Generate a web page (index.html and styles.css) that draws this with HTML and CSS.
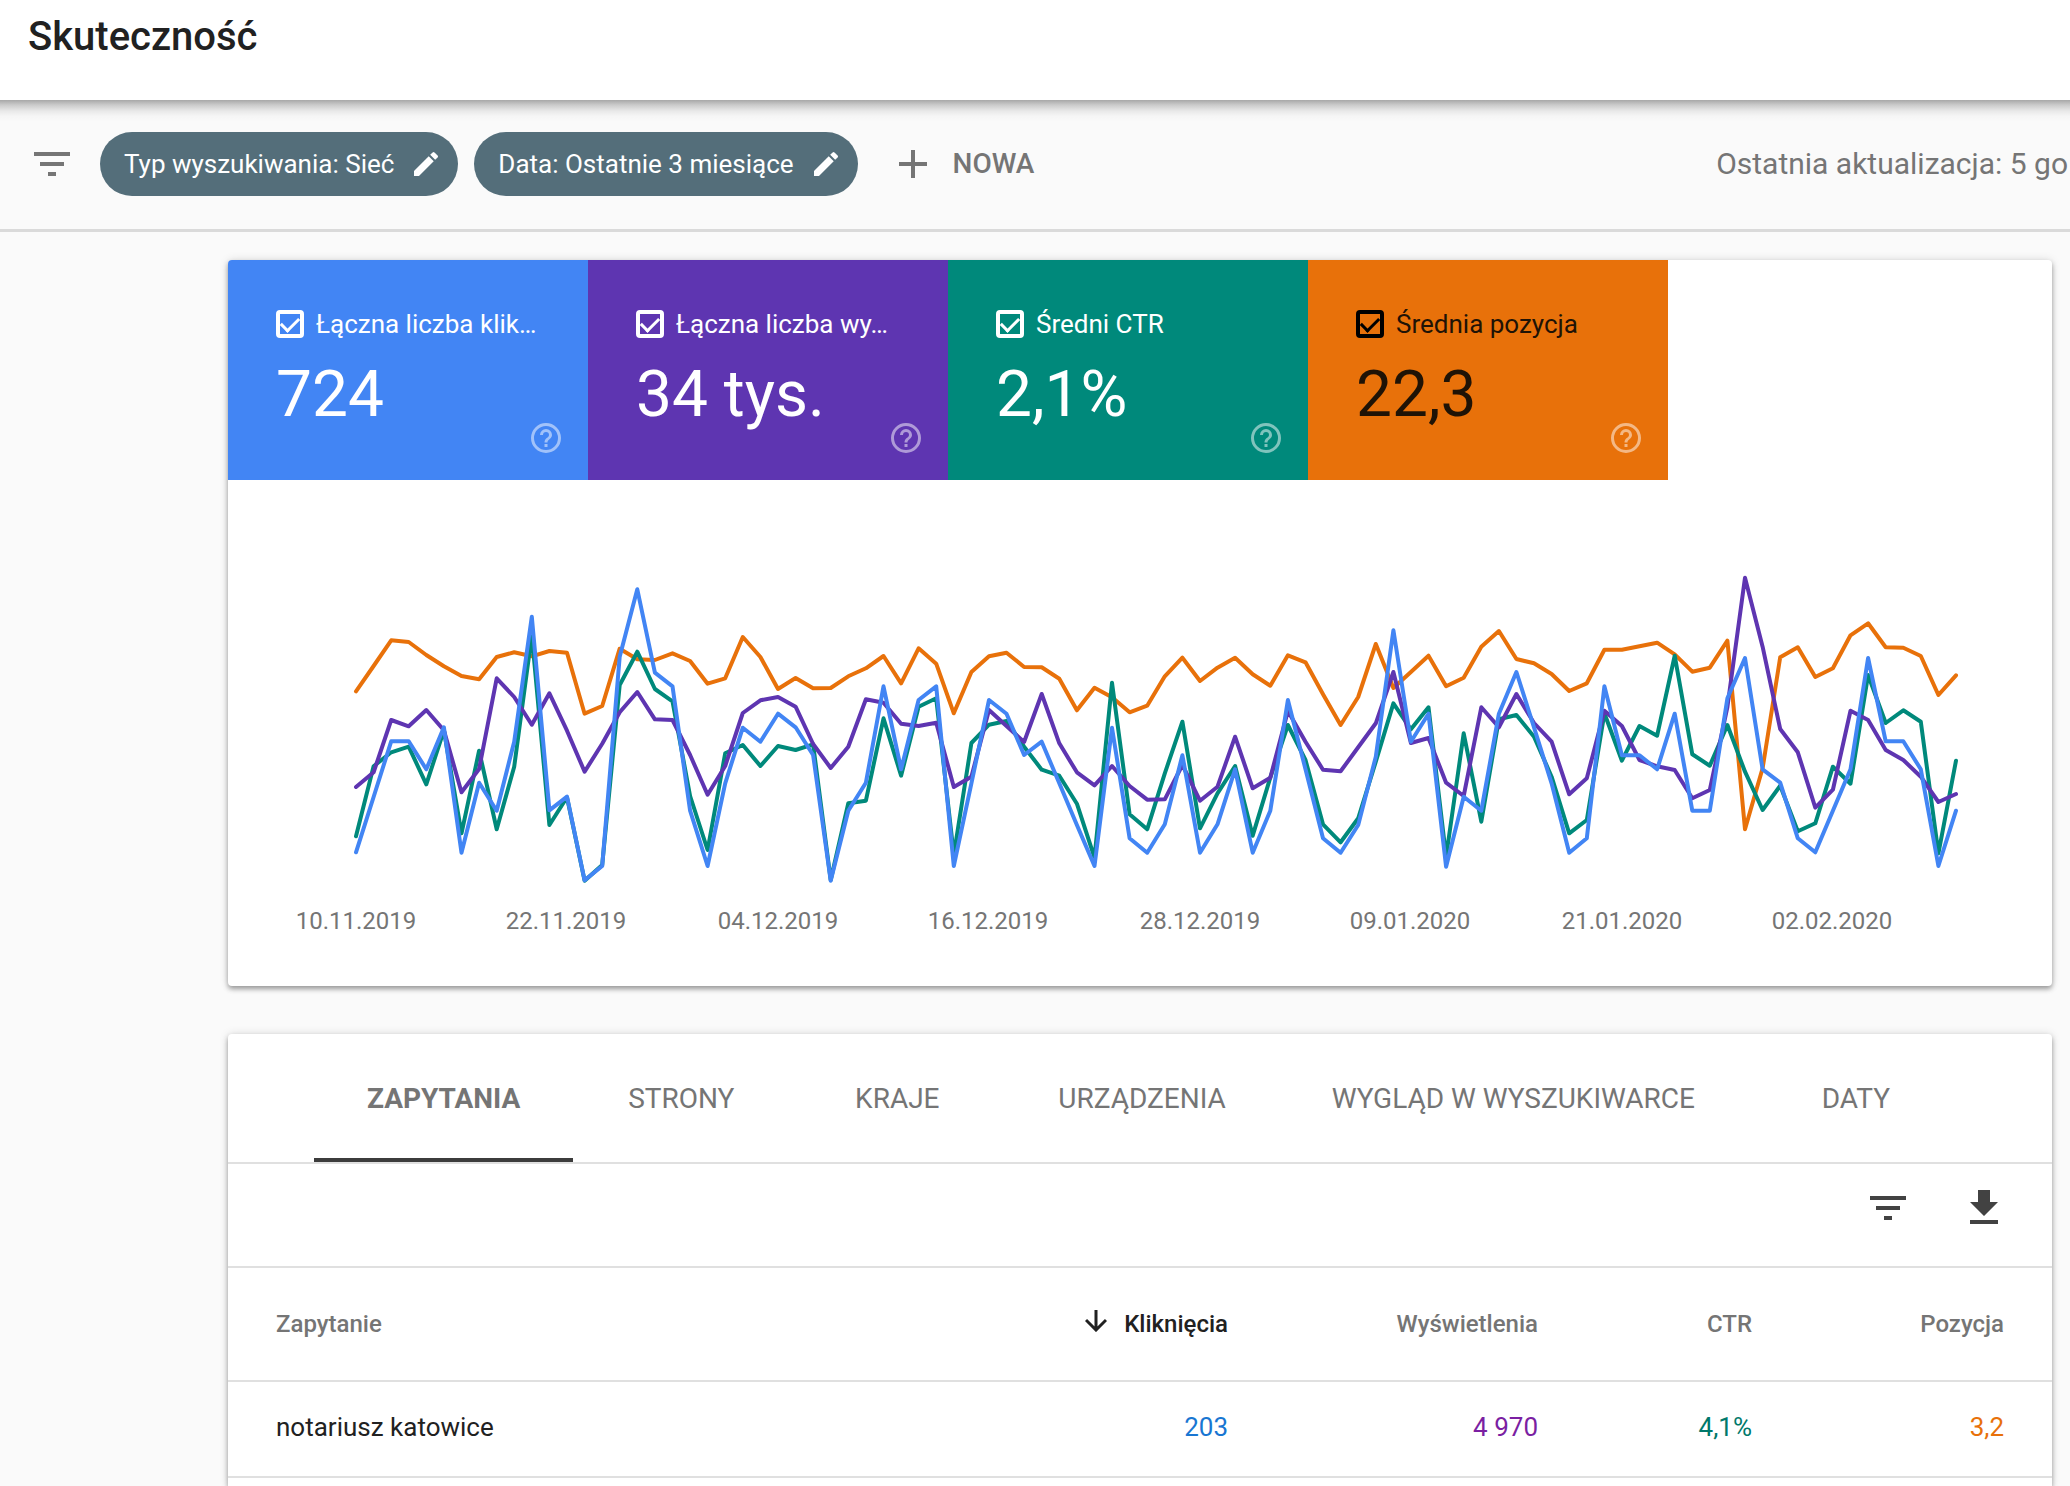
FILE: index.html
```html
<!DOCTYPE html>
<html lang="pl">
<head>
<meta charset="utf-8">
<title>Skuteczność</title>
<link rel="stylesheet" href="styles.css">
</head>
<body>
<svg class="sprite" aria-hidden="true">
  <symbol id="i-filter" viewBox="0 0 24 24"><path d="M10 18h4v-2h-4v2zM3 6v2h18V6H3zm3 7h12v-2H6v2z"/></symbol>
  <symbol id="i-edit" viewBox="0 0 24 24"><path d="M3 17.25V21h3.75L17.81 9.94l-3.75-3.75L3 17.25zM20.71 7.04a1 1 0 0 0 0-1.41l-2.34-2.34a1 1 0 0 0-1.41 0l-1.83 1.83 3.75 3.75 1.83-1.83z"/></symbol>
  <symbol id="i-plus" viewBox="0 0 28 28"><path d="M12 0h4v12h12v4H16v12h-4V16H0v-4h12z"/></symbol>
  <symbol id="i-help" viewBox="0 0 24 24"><path d="M11 18h2v-2h-2v2zm1-16a10 10 0 1 0 0 20 10 10 0 0 0 0-20zm0 18a8 8 0 1 1 0-16 8 8 0 0 1 0 16zm0-14a4 4 0 0 0-4 4h2a2 2 0 1 1 4 0c0 2-3 1.750-3 5h2c0-2.250 3-2.500 3-5a4 4 0 0 0-4-4z"/></symbol>
  <symbol id="i-download" viewBox="0 0 28 36"><path d="M8 0h12v12h8L14 26 0 12h8zM0 30h28v4H0z"/></symbol>
  <symbol id="i-down" viewBox="0 0 22 22"><path d="M11 0v20M1 10l10 10 10-10" fill="none" stroke="currentColor" stroke-width="3"/></symbol>
</svg>

<header class="topbar"><h1>Skuteczność</h1></header>

<div class="filters">
  <svg class="icon-48"><use href="#i-filter"/></svg>
  <button class="chip" type="button">Typ wyszukiwania: Sieć <svg class="icon-chip"><use href="#i-edit"/></svg></button>
  <button class="chip" type="button">Data: Ostatnie 3 miesiące <svg class="icon-chip"><use href="#i-edit"/></svg></button>
  <button class="new" type="button"><svg class="icon-plus"><use href="#i-plus"/></svg>NOWA</button>
  <span class="updated">Ostatnia aktualizacja: 5 go</span>
</div>

<main>
  <section class="card">
    <div class="tiles">
      <div class="tile clicks">
        <label><input type="checkbox" checked><span>Łączna liczba klik…</span></label>
        <strong>724</strong>
        <svg class="help"><use href="#i-help"/></svg>
      </div>
      <div class="tile views">
        <label><input type="checkbox" checked><span>Łączna liczba wy…</span></label>
        <strong>34 tys.</strong>
        <svg class="help"><use href="#i-help"/></svg>
      </div>
      <div class="tile ctr">
        <label><input type="checkbox" checked><span>Średni CTR</span></label>
        <strong>2,1%</strong>
        <svg class="help"><use href="#i-help"/></svg>
      </div>
      <div class="tile position">
        <label><input type="checkbox" checked><span>Średnia pozycja</span></label>
        <strong>22,3</strong>
        <svg class="help"><use href="#i-help"/></svg>
      </div>
    </div>
    <svg id="chart" class="chart" viewBox="0 0 1824 506" role="img" aria-label="Wykres skuteczności"></svg>
  </section>

  <section class="card results">
    <nav class="tabs">
      <button class="tab active" type="button">ZAPYTANIA</button>
      <button class="tab" type="button">STRONY</button>
      <button class="tab" type="button">KRAJE</button>
      <button class="tab" type="button">URZĄDZENIA</button>
      <button class="tab" type="button">WYGLĄD W WYSZUKIWARCE</button>
      <button class="tab" type="button">DATY</button>
    </nav>
    <div class="tools">
      <button type="button" aria-label="Filtruj"><svg class="icon-48"><use href="#i-filter"/></svg></button>
      <button type="button" aria-label="Pobierz"><svg class="icon-download"><use href="#i-download"/></svg></button>
    </div>
    <table>
      <colgroup><col><col class="c-clicks"><col class="c-views"><col class="c-ctr"><col class="c-position"></colgroup>
      <thead>
        <tr><th>Zapytanie</th><th class="sorted"><svg class="icon-down"><use href="#i-down"/></svg>Kliknięcia</th><th>Wyświetlenia</th><th>CTR</th><th>Pozycja</th></tr>
      </thead>
      <tbody>
        <tr><td>notariusz katowice</td><td class="n-clicks">203</td><td class="n-views">4 970</td><td class="n-ctr">4,1%</td><td class="n-position">3,2</td></tr>
      </tbody>
    </table>
  </section>
</main>
<script src="chart.js"></script>
</body>
</html>
```
FILE: styles.css
```css
* { box-sizing: border-box; }

body {
  display: flex;
  flex-direction: column;
  margin: 0;
  min-height: 100vh;
  background: #fafafa;
  color: #212121;
  font-family: Roboto, "Liberation Sans", sans-serif;
  font-size: 26px;
}

button {
  border: 0;
  padding: 0;
  background: none;
  color: inherit;
  font: inherit;
  cursor: pointer;
}

svg { fill: currentColor; flex: none; }

.sprite { display: none; }

.topbar {
  height: 100px;
  padding: 13px 28px;
  background: #fff;
}

h1 {
  margin: 0;
  font-size: 40px;
  line-height: 48px;
  font-weight: 500;
}

.filters {
  display: flex;
  align-items: center;
  height: 132px;
  padding: 0 0 2px 28px;
  border-bottom: 3px solid #dadada;
  background: linear-gradient(rgba(0, 0, 0, .33), rgba(0, 0, 0, .19) 5px, rgba(0, 0, 0, .07) 11px, rgba(0, 0, 0, .02) 16px, transparent 22px);
  color: #757575;
  white-space: nowrap;
}

.icon-48 { width: 48px; height: 48px; display: block; }

.chip {
  display: flex;
  align-items: center;
  gap: 16px;
  height: 64px;
  margin-left: 16px;
  padding: 0 16px 0 24px;
  border-radius: 32px;
  background: #546e7a;
  color: #fff;
}

.filters .icon-48 { margin-right: 8px; }

.icon-chip { width: 32px; height: 32px; }

.new {
  display: flex;
  align-items: center;
  gap: 26px;
  margin-left: 41px;
  font-size: 28px;
  font-weight: 500;
}

.icon-plus { width: 28px; height: 28px; }

.updated { margin-left: auto; font-size: 30px; padding-right: 2px; }

main {
  display: flex;
  flex: 1;
  flex-direction: column;
  gap: 48px;
  padding: 28px 18px 0 228px;
}

.card {
  background: #fff;
  border-radius: 4px;
  box-shadow: 0 3px 5px rgba(0, 0, 0, .35), 0 0 10px rgba(0, 0, 0, .12);
}

.results { flex: 1; border-radius: 4px 4px 0 0; }

.tiles { display: flex; }

.tile {
  position: relative;
  width: 360px;
  height: 220px;
  padding: 47px 48px 0;
  color: #fff;
}

.clicks { background: #4285f4; border-top-left-radius: 4px; }
.views { background: #5e35b1; }
.ctr { background: #00897b; }
.position { background: #e8710a; color: #1f1306; }

.tile label {
  display: flex;
  align-items: center;
  gap: 12px;
  line-height: 34px;
  white-space: nowrap;
}

.tile input {
  appearance: none;
  flex: none;
  width: 28px;
  height: 28px;
  margin: 0;
  border: 4px solid #fff;
  border-radius: 4px;
  display: grid;
  place-items: center;
}

.tile input::after {
  content: "";
  width: 15px;
  height: 8px;
  border: solid #fff;
  border-width: 0 0 3px 3px;
  transform: translateY(-2px) rotate(-45deg);
}

.position input, .position input::after { border-color: #000; }

.tile strong {
  display: block;
  margin-top: 16px;
  font-size: 64px;
  line-height: 76px;
  font-weight: 400;
}

.help {
  position: absolute;
  right: 24px;
  bottom: 24px;
  width: 36px;
  height: 36px;
  color: rgba(255, 255, 255, .5);
}

.chart { display: block; width: 100%; height: auto; }
.chart polyline {
  fill: none;
  stroke-width: 4;
  stroke-linejoin: round;
  stroke-linecap: round;
}
.chart text { fill: #757575; font-size: 24px; text-anchor: middle; }
.line-position { stroke: #e8710a; }
.line-ctr { stroke: #00897b; }
.line-views { stroke: #5e35b1; }
.line-clicks { stroke: #4285f4; }

.tabs {
  display: flex;
  height: 130px;
  padding-left: 86px;
  border-bottom: 2px solid #e0e0e0;
  color: #757575;
  font-size: 28px;
}

.tab {
  min-width: 216px;
  padding: 0 53px;
  border-top: 4px solid transparent;
  border-bottom: 4px solid transparent;
}
.active { border-bottom-color: #3c3c3c; font-weight: 700; }

.tools {
  display: flex;
  justify-content: flex-end;
  align-items: center;
  gap: 58px;
  height: 104px;
  padding: 0 54px 14px 0;
  border-bottom: 2px solid #e0e0e0;
  color: #424242;
}

.icon-download { display: block; width: 28px; height: 36px; }

table { width: 100%; border-collapse: separate; border-spacing: 0; table-layout: fixed; }
.c-clicks { width: 310px; }
.c-views { width: 310px; }
.c-ctr { width: 214px; }
.c-position { width: 300px; }

th, td {
  height: 96px;
  padding: 0 48px 4px 0;
  border-bottom: 2px solid #e0e0e0;
  text-align: right;
}
th { height: 114px; padding-bottom: 0; color: #757575; font-size: 24px; font-weight: 500; }
th:first-child, td:first-child { padding-left: 48px; text-align: left; }
th:nth-child(n+2):nth-child(-n+4), td:nth-child(n+2):nth-child(-n+4) { padding-right: 0; }
.sorted { color: #212121; }
.icon-down { width: 22px; height: 22px; margin-right: 17px; }

.n-clicks { color: #1976d2; }
.n-views { color: #7b1fa2; }
.n-ctr { color: #00796b; }
.n-position { color: #e8710a; }
```
FILE: chart.js
```js
// Daily series, one value a day; values run downwards from the plot's top, three units to a pixel.
const series = {
  position: [394,318,241,246,285,319,348,358,291,277,289,273,278,461,438,266,298,300,280,303,371,355,231,291,
    387,354,385,384,349,325,288,370,265,311,460,336,289,278,321,322,356,451,383,412,457,437,349,
    293,363,323,293,343,377,286,307,403,495,411,252,384,336,287,379,353,260,213,297,310,342,393,
    370,269,269,259,248,283,335,323,242,808,625,292,262,351,325,226,190,262,263,288,405,346],
  ctr: [829,619,577,560,673,511,820,572,808,620,225,795,712,962,915,375,275,387,424,708,870,580,555,618,
    558,570,553,960,730,722,475,647,440,415,885,549,494,483,560,629,647,731,893,368,763,808,640,
    485,805,700,618,827,653,495,600,793,847,775,605,430,508,442,890,520,785,478,465,530,650,820,
    780,460,602,498,527,287,583,617,495,635,750,677,814,790,620,671,345,489,451,485,880,602],
  views: [681,637,480,499,450,511,697,627,355,411,494,400,512,635,551,457,396,478,480,585,704,618,459,421,
    411,440,552,624,560,418,428,491,498,488,681,650,450,498,546,402,550,637,676,618,678,719,718,
    615,722,680,530,685,653,453,545,629,634,562,490,336,549,534,668,708,442,502,402,489,545,703,
    655,452,498,600,619,630,715,690,441,53,260,507,577,743,689,452,480,570,600,650,726,702],
  clicks: [877,711,544,544,628,502,878,668,752,545,170,751,710,961,918,290,88,338,379,752,918,670,503,545,
    461,502,585,962,752,668,379,628,420,379,918,670,420,461,585,545,670,795,918,503,835,878,793,
    586,878,793,628,878,752,420,628,835,878,795,590,211,545,461,920,710,752,461,336,502,670,878,
    835,379,586,586,628,461,752,752,415,294,628,668,835,877,752,628,294,544,544,628,918,752]
};
const dates = ["10.11.2019", "22.11.2019", "04.12.2019", "16.12.2019", "28.12.2019", "09.01.2020", "21.01.2020", "02.02.2020"];

const chart = document.getElementById("chart");
const left = 128, top0 = 80, width = 1600, lastDay = 91;
const dayX = day => left + day * width / lastDay;

function add(tag, attributes) {
  const node = document.createElementNS("http://www.w3.org/2000/svg", tag);
  for (const name in attributes) node.setAttribute(name, attributes[name]);
  chart.appendChild(node);
  return node;
}

for (const name in series) {
  const points = series[name].map((v, day) => `${dayX(day).toFixed(1)},${(top0 + v / 3).toFixed(1)}`);
  add("polyline", { class: "line-" + name, points: points.join(" ") });
}
// Labels sit on even positions.
dates.forEach((date, i) => {
  add("text", { x: 2 * Math.floor(Math.round(dayX(i * 12)) / 2), y: 449 }).textContent = date;
});
```
